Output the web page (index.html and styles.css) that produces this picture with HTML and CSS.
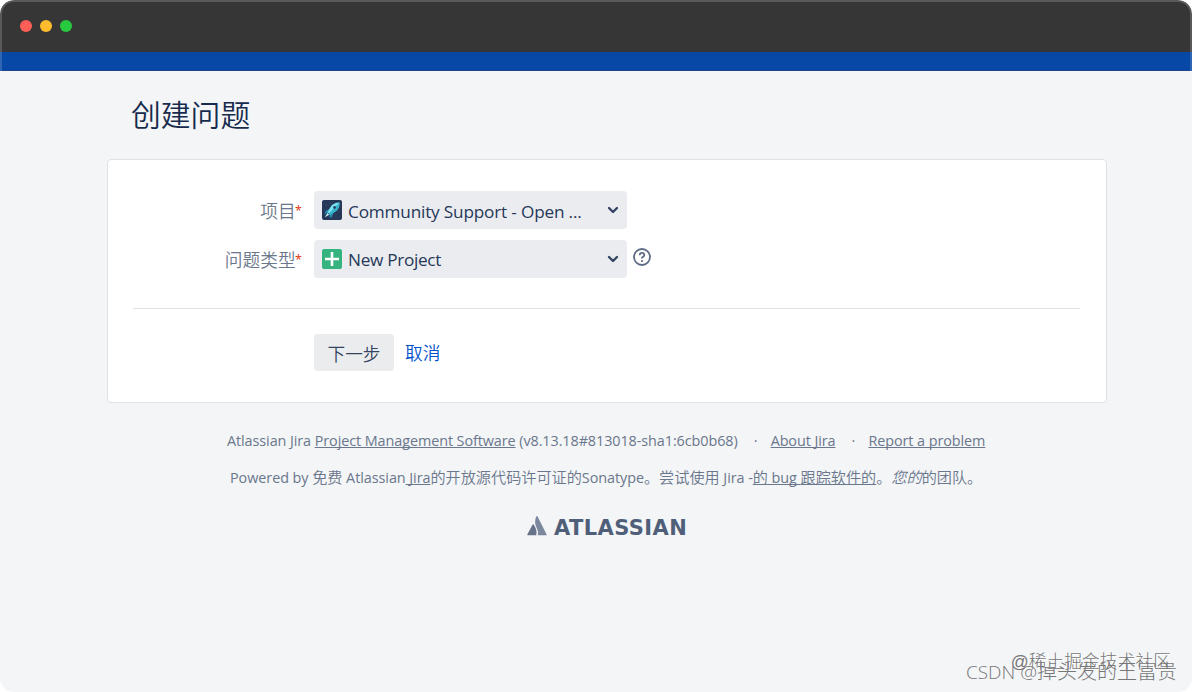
FILE: index.html
```html
<!DOCTYPE html>
<html lang="zh-CN">
<head>
    <meta charset="UTF-8">
    <meta name="viewport" content="width=device-width, initial-scale=1.0">
    <title>创建问题</title>
    <link rel="stylesheet" href="styles.css">
</head>
<body>

    <div class="window">
        <div class="titlebar">
            <span class="dot red"></span>
            <span class="dot yellow"></span>
            <span class="dot green"></span>
        </div>
        <div class="navbar"></div>

        <h1 class="page-title">创建问题</h1>

        <form class="panel">
            <div class="row">
                <label class="label">项目<span class="required">*</span></label>
                <div class="select">
                    <svg class="select-icon" viewBox="0 0 20 20">
                        <rect width="20" height="20" rx="2" fill="#253858"/>
                        <g fill="#3d638c">
                            <circle cx="4" cy="5" r=".6"/><circle cx="8" cy="3" r=".6"/><circle cx="3" cy="10" r=".5"/>
                            <circle cx="16" cy="11" r=".6"/><circle cx="14" cy="16" r=".6"/><circle cx="10" cy="18" r=".5"/>
                        </g>
                        <path d="M7 9L3.5 11 2.5 14.5 6 13zM11.5 13L10 17 7 17.5 8 14z" fill="#2684a8"/>
                        <path d="M17.5 2.5Q11 2.5 8.5 7L5.5 12 8 14.8 13 11.8Q17.7 9 17.5 2.5z" fill="#79e2f2"/>
                        <path d="M17.5 2.5Q17.7 9 13 11.8L8 14.8 6.8 13.5z" fill="#36b3cc"/>
                        <circle cx="12.6" cy="7.4" r="1.3" fill="#253858"/>
                        <path d="M5.5 13L2.8 17.2 7.2 14.8z" fill="#c1f0f5"/>
                    </svg>
                    <span class="select-text project-name">Community Support - Open ...</span>
                    <svg class="arrow" viewBox="0 0 12 8"><path d="M2 2l4 4 4-4"/></svg>
                </div>
            </div>

            <div class="row">
                <label class="label">问题类型<span class="required">*</span></label>
                <div class="select">
                    <svg class="select-icon" viewBox="0 0 20 20">
                        <rect width="20" height="20" rx="2" fill="#36b37e"/>
                        <path d="M10 3v14M3 10h14" stroke="#fff" stroke-width="2.6"/>
                    </svg>
                    <span class="select-text issue-type">New Project</span>
                    <svg class="arrow" viewBox="0 0 12 8"><path d="M2 2l4 4 4-4"/></svg>
                </div>
                <svg class="help" viewBox="0 0 18 18">
                    <circle cx="9" cy="9" r="8"/>
                    <path d="M6.7 7.2Q6.8 4.9 9 4.9T11.3 7Q11.3 8.2 10 8.9T9 10.6"/>
                    <circle class="help-dot" cx="9" cy="13" r="1.1"/>
                </svg>
            </div>

            <div class="buttons">
                <button type="button" class="next-button">下一步</button>
                <a class="cancel">取消</a>
            </div>
        </form>

        <div class="footer">
            <div class="footer-line links">
                <span class="product">Atlassian Jira <u>Project Management Software</u> (v8.13.18#813018-sha1:6cb0b68)</span>
                <span class="separator">·</span>
                <u>About Jira</u>
                <span class="separator">·</span>
                <u>Report a problem</u>
            </div>
            <div class="footer-line license">
                <span><span class="latin">Powered by </span>免费<span class="latin"> Atlassian<u> Jira</u></span>的开放源代码许可证的<span class="latin">Sonatype</span>。尝试使用<span class="latin"> Jira -</span><u>的<span class="latin"> bug </span>跟踪软件的</u>。<i>您的</i>的团队。</span>
            </div>
            <div class="logo">
                <svg class="logo-mark" viewBox="0 0 20 20">
                    <path d="M9.2.6Q7.4 5 8.6 9L10.6 14.4Q11.4 16.8 10.8 19.2H19.4Q20 19.2 19.6 18.4L10.6.6Q9.9-.4 9.2.6z" fill="#7d879d"/>
                    <path d="M6.8 8.8Q6 7.8 5.4 9L.3 18.4Q0 19.2.7 19.2H9.2Q10.4 14 6.8 8.8z" fill="#66718a"/>
                </svg>
                <span class="logo-text">ATLASSIAN</span>
            </div>
        </div>

        <div class="watermark community">@稀土掘金技术社区</div>
        <div class="watermark csdn"><span class="csdn-name">CSDN @</span>掉头发的王富贵</div>
    </div>

</body>
</html>
```
FILE: styles.css
```css
body {
    margin: 0;
    background-color: #ffffff;
    font-family: "Open Sans", "Noto Sans CJK SC", sans-serif;
    font-size: 17.7px;
    color: #172b4d;
}

u {
    text-decoration-skip-ink: none;
}

.window {
    position: relative;
    height: 692px;
    background-color: #f3f5f7;
    border-radius: 14px;
    overflow: hidden;
}

.titlebar {
    display: flex;
    gap: 8px;
    height: 52px;
    padding: 18px 18px 0;
    box-sizing: border-box;
    background-color: #363636;
    border: 2px solid #595959;
    border-bottom: 0;
    border-radius: 14px 14px 0 0;
}

.dot {
    width: 12px;
    height: 12px;
    border-radius: 50%;
}
.red { background-color: #ff5f56; }
.yellow { background-color: #ffbd2e; }
.green { background-color: #27c93f; }

.navbar {
    height: 19px;
    box-sizing: border-box;
    background-color: #0747a6;
    border: 2px solid #2e65b4;
    border-width: 0 2px;
    box-shadow: inset 0 -1px #1d4488;
}

.page-title {
    margin: 22px 0 0 131px;
    font-size: 29.8px;
    line-height: 44px;
    font-weight: 350;
}

.panel {
    width: 1000px;
    height: 244px;
    margin: 22px 0 0 107px;
    padding: 31px 26px 0 25px;
    box-sizing: border-box;
    background-color: #ffffff;
    border: 1px solid #dfe1e5;
    border-radius: 4px;
}

.row {
    display: flex;
    height: 38px;
    margin-bottom: 11px;
}

.label {
    width: 169px;
    margin-right: 12px;
    line-height: 41px;
    text-align: right;
    font-weight: 350;
    color: #6b778c;
    white-space: nowrap;
}

.required {
    color: #de350b;
    font-size: 12.5px;
    font-weight: 400;
    vertical-align: 3px;
    line-height: 1;
    margin-left: -0.5px;
}

.select {
    display: flex;
    align-items: center;
    width: 313px;
    padding: 0 8px;
    box-sizing: border-box;
    background-color: #ebecf0;
    border-radius: 4px;
}

.select-icon {
    width: 20px;
    height: 20px;
    margin-right: 6px;
}

.select-text {
    flex-grow: 1;
    font-size: 17.2px;
    line-height: 36px;
    padding-top: 2px;
    color: #253858;
    white-space: nowrap;
}
.project-name {
    padding-top: 3px;
    letter-spacing: -0.18px;
}
.issue-type { letter-spacing: -0.3px; }

.arrow {
    width: 12px;
    height: 8px;
    fill: none;
    stroke: #344563;
    stroke-width: 2.4;
    stroke-linecap: round;
    stroke-linejoin: round;
}

.help {
    width: 18px;
    height: 18px;
    margin: 8px 0 0 5.5px;
    fill: none;
    stroke: #5e6c84;
    stroke-width: 1.8;
}
.help-dot {
    fill: #5e6c84;
    stroke: none;
}

.buttons {
    display: flex;
    margin-top: 30px;
    padding: 25px 0 0 181px;
    border-top: 1px solid #dfe1e5;
}

.next-button {
    width: 80px;
    height: 37px;
    padding: 0;
    border: 0;
    border-radius: 4px;
    background-color: #ebecee;
    color: #344563;
    font: inherit;
    font-weight: 350;
}

.cancel {
    margin-left: 11px;
    line-height: 39px;
    font-weight: 350;
    color: #0052cc;
}

.footer {
    padding-left: 227px;
    font-size: 15.15px;
    font-weight: 350;
    color: #6b778c;
    white-space: nowrap;
}

.footer-line {
    display: flex;
    height: 22px;
    margin-top: 27px;
    line-height: 22px;
}
.links {
    font-size: 14.4px;
    font-weight: 400;
    letter-spacing: -0.08px;
}
.separator {
    width: 33px;
    padding-left: 3px;
    box-sizing: border-box;
    text-align: center;
}
.license {
    margin: 14px 0 0 3px;
}
.latin {
    font-size: 14.4px;
    font-weight: 400;
    letter-spacing: -0.06px;
}

.logo {
    display: flex;
    align-items: center;
    height: 22px;
    margin: 27px 0 0 300px;
}

.logo-mark {
    width: 20px;
    height: 20px;
    margin-right: 7px;
}

.logo-text {
    padding-top: 3px;
    font-family: "DejaVu Sans", sans-serif;
    font-size: 21px;
    font-weight: 700;
    line-height: 22px;
    letter-spacing: 0.4px;
    color: #505f79;
}

.watermark {
    position: absolute;
    font-family: "Liberation Sans", "Noto Sans CJK SC", sans-serif;
    font-weight: 300;
    color: #777777;
    text-shadow: 1px 1px #ffffff;
    white-space: nowrap;
}
.community {
    right: 21px;
    bottom: 17px;
    font-size: 17.8px;
    line-height: 26px;
}
.csdn {
    right: 15px;
    bottom: 6px;
    font-size: 20px;
    line-height: 28px;
    text-shadow: none;
}
.csdn-name {
    font-family: "Open Sans", sans-serif;
    font-size: 19px;
}
```
